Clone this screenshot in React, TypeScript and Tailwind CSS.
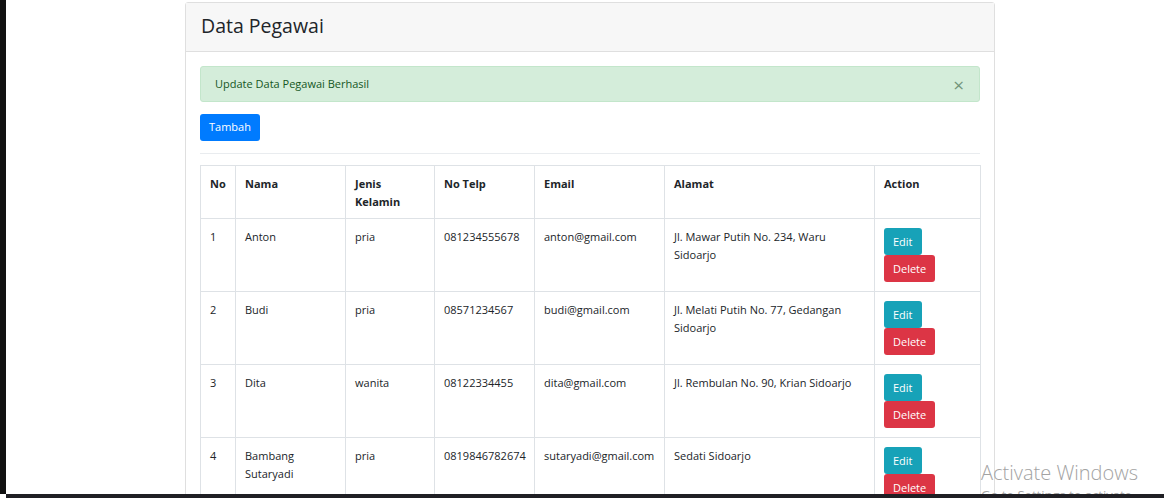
import React from "react";

const rows = [
  { no: "1", nama: ["Anton"], jk: "pria", telp: "081234555678", email: "anton@gmail.com", alamat: ["Jl. Mawar Putih No. 234, Waru", "Sidoarjo"] },
  { no: "2", nama: ["Budi"], jk: "pria", telp: "08571234567", email: "budi@gmail.com", alamat: ["Jl. Melati Putih No. 77, Gedangan", "Sidoarjo"] },
  { no: "3", nama: ["Dita"], jk: "wanita", telp: "08122334455", email: "dita@gmail.com", alamat: ["Jl. Rembulan No. 90, Krian Sidoarjo"] },
  { no: "4", nama: ["Bambang", "Sutaryadi"], jk: "pria", telp: "0819846782674", email: "sutaryadi@gmail.com", alamat: ["Sedati Sidoarjo"] },
];

const font = { fontFamily: '"Open Sans", "Noto Sans", sans-serif' };

export default function App() {
  return (
    <div className="h-[498px] w-[1164px] overflow-hidden bg-white flex flex-col text-[#212529]" style={font}>
      <div className="flex flex-1 min-h-0">
        <div className="w-[6px] bg-[#111111] shrink-0" />
        <div className="flex-1 relative overflow-hidden">
          <div className="ml-[179px] mt-[2px] w-[810px] border border-[#dfdfdf] rounded-[3px]">
            <div className="h-[49px] bg-[#f7f7f7] border-b border-[#dfdfdf] px-[15px] flex items-center">
              <h3 className="text-[19.5px] leading-none text-[#212529] pb-[2px]">Data Pegawai</h3>
            </div>
            <div className="px-[14px] pt-[14px]">
              <div className="h-[36px] bg-[#d4edda] border border-[#c3e6cb] rounded-[3px] text-[#155724] text-[11px] flex items-center justify-between pl-[14px] pr-[15px]">
                <span className="pt-[1px]">Update Data Pegawai Berhasil</span>
                <span className="text-[19px] text-[#0f3d19] opacity-50 leading-none pt-[3px]">×</span>
              </div>
              <button className="mt-[12px] h-[27px] px-[9px] bg-[#007bff] text-white text-[11px] rounded-[3px]">Tambah</button>
              <div className="mt-[12px] border-t border-[#e9ecef]" />
              <table className="mt-[11px] w-[780px] border-collapse border border-[#dee2e6] text-[11px] leading-[18px] table-fixed">
                <colgroup>
                  <col className="w-[35px]" />
                  <col className="w-[110px]" />
                  <col className="w-[89px]" />
                  <col className="w-[100px]" />
                  <col className="w-[130px]" />
                  <col className="w-[210px]" />
                  <col className="w-[106px]" />
                </colgroup>
                <thead>
                  <tr>
                    {["No", "Nama", "Jenis Kelamin", "No Telp", "Email", "Alamat", "Action"].map((h) => (
                      <th key={h} className="border border-[#dee2e6] px-[9px] pt-[9px] pb-[7px] text-left align-top font-bold">
                        {h === "Jenis Kelamin" ? (
                          <>Jenis<br />Kelamin</>
                        ) : (
                          h
                        )}
                      </th>
                    ))}
                  </tr>
                </thead>
                <tbody>
                  {rows.map((r) => (
                    <tr key={r.no}>
                      <td className="border border-[#dee2e6] px-[9px] pt-[9px] align-top">{r.no}</td>
                      <td className="border border-[#dee2e6] px-[9px] pt-[9px] align-top">
                        {r.nama.map((n, i) => (
                          <div key={i}>{n}</div>
                        ))}
                      </td>
                      <td className="border border-[#dee2e6] px-[9px] pt-[9px] align-top">{r.jk}</td>
                      <td className="border border-[#dee2e6] px-[9px] pt-[9px] align-top">{r.telp}</td>
                      <td className="border border-[#dee2e6] px-[9px] pt-[9px] align-top">{r.email}</td>
                      <td className="border border-[#dee2e6] px-[9px] pt-[9px] align-top">
                        {r.alamat.map((a, i) => (
                          <div key={i}>{a}</div>
                        ))}
                      </td>
                      <td className="border border-[#dee2e6] px-[9px] pt-[9px] pb-[9px] align-top">
                        <div className="flex flex-col items-start">
                          <button className="h-[27px] px-[9px] bg-[#17a2b8] text-white rounded-[3px] text-[11px]">Edit</button>
                          <button className="h-[27px] px-[9px] bg-[#dc3545] text-white rounded-[3px] text-[11px]">Delete</button>
                        </div>
                      </td>
                    </tr>
                  ))}
                </tbody>
              </table>
            </div>
          </div>
          <div className="absolute left-[975px] top-[463px] text-[#a3a3a3] leading-none pointer-events-none">
            <div className="text-[20px] font-light">Activate Windows</div>
            <div className="text-[13px] mt-[6px]">Go to Settings to activate Windows.</div>
          </div>
        </div>
      </div>
      <div className="h-[4px] bg-[#1f1f24] ml-[6px]" />
    </div>
  );
}
